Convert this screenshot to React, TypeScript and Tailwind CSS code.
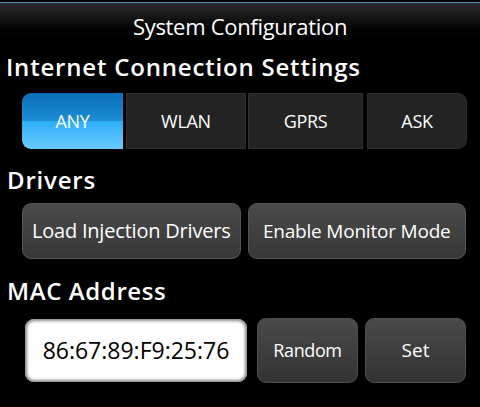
import React from "react";

const F = { fontFamily: '"Open Sans", "Noto Sans", sans-serif' };

export default function App() {
  return (
    <div className="w-[480px] h-[407px] bg-black overflow-hidden text-white" style={F}>
      <div className="h-[2px] bg-black" />
      <div className="h-[1px] bg-[#4f90b5]" />
      <div className="h-[43px] bg-gradient-to-b from-[#2c2c2c] to-black flex items-center justify-center">
        <span className="text-[22px] leading-none tracking-[-0.3px] pt-[2px]">System Configuration</span>
      </div>
      <div className="pl-[6px] pt-[9px] h-[33px]">
        <div className="text-[24px] leading-none font-semibold tracking-[0.8px]">Internet Connection Settings</div>
      </div>
      <div className="flex ml-[22px] w-[445px] h-[56px] mt-[14px]">
        <div className="w-[101px] rounded-l-[9px] overflow-hidden relative flex flex-col">
          <div className="h-[28px] bg-gradient-to-b from-[#0a6fb6] to-[#1c8ed6]" />
          <div className="flex-1 bg-gradient-to-b from-[#27adf6] to-[#6acbff]" />
          <span className="absolute inset-0 flex items-center justify-center text-[18px] tracking-[-0.4px]">ANY</span>
        </div>
        <div className="w-[120px] ml-[3px] bg-[#232323] border border-[#2f2f2f] flex items-center justify-center text-[18px] tracking-[-0.3px]">WLAN</div>
        <div className="w-[115px] ml-[2px] bg-[#232323] border border-[#2f2f2f] flex items-center justify-center text-[18px] tracking-[-0.3px]">GPRS</div>
        <div className="flex-1 ml-[4px] bg-[#232323] border border-[#2f2f2f] rounded-r-[9px] flex items-center justify-center text-[18px] tracking-[-0.3px]">ASK</div>
      </div>
      <div className="pl-[7px] mt-[19px] h-[24px]">
        <div className="text-[24px] leading-none font-semibold tracking-[0.8px]">Drivers</div>
      </div>
      <div className="flex ml-[22px] w-[444px] h-[56px] gap-[7px] mt-[11px]">
        <div className="flex-1 rounded-[9px] bg-gradient-to-b from-[#4a4a4a] to-[#383838] border border-[#555] flex items-center justify-center text-[20px] tracking-[-0.2px]">Load Injection Drivers</div>
        <div className="flex-1 rounded-[9px] bg-gradient-to-b from-[#4a4a4a] to-[#383838] border border-[#555] flex items-center justify-center text-[19px] tracking-[-0.2px]">Enable Monitor Mode</div>
      </div>
      <div className="pl-[7px] mt-[20px] h-[24px]">
        <div className="text-[24px] leading-none font-semibold tracking-[0.6px]">MAC Address</div>
      </div>
      <div className="flex items-center ml-[25px] w-[441px] h-[65px] mt-[15px]">
        <div className="w-[222px] h-[63px] rounded-[9px] bg-white shadow-[inset_0_0_3px_2px_#888] flex items-center justify-center text-black text-[23px]">86:67:89:F9:25:76</div>
        <div className="w-[101px] h-[65px] ml-[10px] rounded-[9px] bg-gradient-to-b from-[#4a4a4a] to-[#333] border border-[#4e4e4e] flex items-center justify-center text-[18px] tracking-[-0.4px]">Random</div>
        <div className="flex-1 h-[65px] ml-[7px] rounded-[9px] bg-gradient-to-b from-[#4a4a4a] to-[#333] border border-[#4e4e4e] flex items-center justify-center text-[19px]">Set</div>
      </div>
    </div>
  );
}
